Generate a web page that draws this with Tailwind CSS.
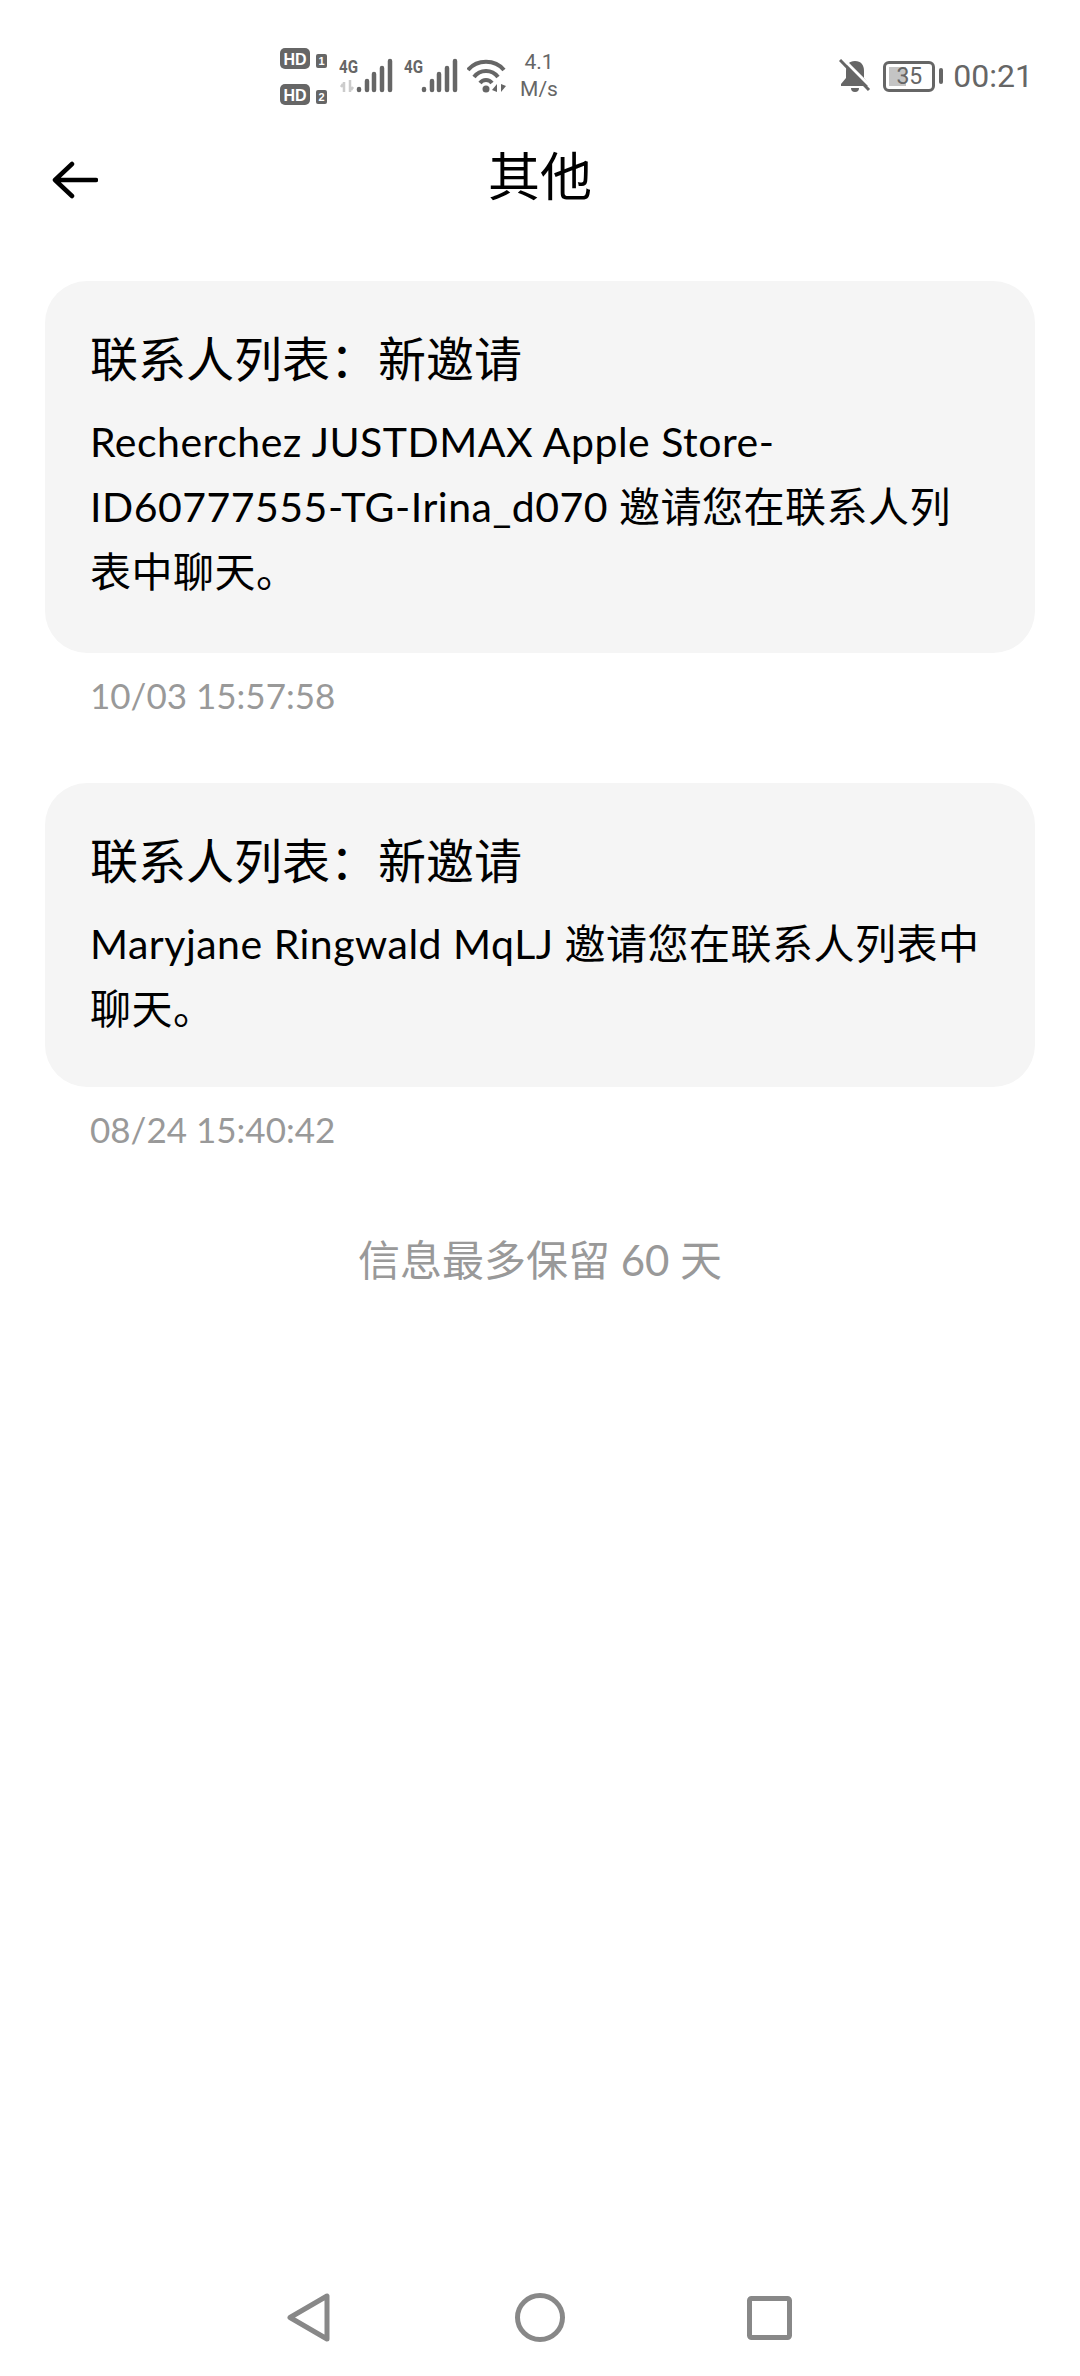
<!DOCTYPE html>
<html lang="zh">
<head>
    <meta charset="UTF-8">
    <meta name="viewport" content="width=device-width, initial-scale=1.0">
    <title>其他</title>
    <script src="https://cdn.jsdelivr.net/npm/@tailwindcss/browser@4"></script>
</head>
<body class="bg-white">
    <div class="w-[1080px] h-[2376px] flex flex-col font-['Lato','Noto_Sans_CJK_SC',sans-serif] text-black overflow-hidden">

        <!-- status bar -->
        <div class="h-[152px] shrink-0 flex items-center pl-[280px] pr-[47px] text-[#666] font-['Roboto','Noto_Sans_CJK_SC',sans-serif]">
            <div class="flex flex-col gap-[15px] w-[48px] shrink-0">
                <svg width="48" height="21" viewBox="0 0 48 21"><rect x="0" y="0" width="30" height="21" rx="5" fill="#666"/><text x="15" y="16.500" text-anchor="middle" font-family="Liberation Sans" font-weight="700" font-size="16" fill="#fff">HD</text><rect x="36" y="6" width="11" height="14" rx="2" fill="#666"/><text x="41.500" y="17" text-anchor="middle" font-family="Liberation Sans" font-weight="700" font-size="11" fill="#fff">1</text></svg>
                <svg width="48" height="21" viewBox="0 0 48 21"><rect x="0" y="0" width="30" height="21" rx="5" fill="#666"/><text x="15" y="16.500" text-anchor="middle" font-family="Liberation Sans" font-weight="700" font-size="16" fill="#fff">HD</text><rect x="36" y="6" width="11" height="14" rx="2" fill="#666"/><text x="41.500" y="17" text-anchor="middle" font-family="Liberation Sans" font-weight="700" font-size="11" fill="#fff">2</text></svg>
            </div>
            <svg class="ml-[11px] mb-[6px] shrink-0" width="54" height="40" viewBox="0 -6 54 40">
                <text x="0" y="14" font-family="Roboto" font-weight="700" font-size="19" fill="#666" textLength="19" lengthAdjust="spacingAndGlyphs">4G</text>
                <path d="M5 33V23M4 25l-2 3M11 21v12M12 31l2-3" stroke="#ccc" stroke-width="2.500" fill="none"/>
                <g stroke="#666" stroke-width="4.500" stroke-linecap="round"><path d="M20 31v-1M28 31V22M35 31V15M43 31V9M51 31V2"/></g>
            </svg>
            <svg class="ml-[11px] mb-[6px] shrink-0" width="54" height="40" viewBox="0 -6 54 40">
                <text x="0" y="14" font-family="Roboto" font-weight="700" font-size="19" fill="#666" textLength="19" lengthAdjust="spacingAndGlyphs">4G</text>
                <g stroke="#666" stroke-width="4.500" stroke-linecap="round"><path d="M20 31v-1M28 31V22M35 31V15M43 31V9M51 31V2"/></g>
            </svg>
            <svg class="ml-[9px] shrink-0" width="42" height="34" viewBox="0 0 42 34">
                <g fill="none" stroke="#666" stroke-width="4"><path d="M1 11C10 0 28 0 37 11"/><path d="M7 18C13 10 25 10 31 18"/><path d="M13 24C16 20 22 20 25 24"/></g>
                <circle cx="19" cy="30" r="3.500" fill="#666"/>
                <path d="M30 33v-8l-5 6zM34 25v8l5-6z" fill="#666"/>
            </svg>
            <div class="ml-[8px] w-[44px] shrink-0 text-[21px] leading-[27px] text-center">4.1<br>M/s</div>
            <svg class="ml-auto shrink-0" width="32" height="34" viewBox="0 0 32 34">
                <path d="M16 2c-6 0-9 4-9 10v7l-5 6v2h28v-2l-5-6v-7c0-6-3-10-9-10z" fill="#666"/>
                <path d="M12 29a4 4 0 0 0 8 0z" fill="#666"/>
                <path d="M3 -1l29 29" stroke="#fff" stroke-width="3"/>
                <path d="M1 1l29 30" stroke="#666" stroke-width="3"/>
            </svg>
            <div class="ml-[12px] w-[52px] h-[31px] shrink-0 border-[3px] border-[#666] rounded-[6px] p-[3px] relative">
                <div class="h-full w-[42%] bg-[#c4c4c4]"></div>
                <div class="absolute inset-0 flex items-center justify-center text-[23px] leading-none">35</div>
            </div>
            <div class="ml-[4px] w-[4px] h-[16px] bg-[#666] rounded-[2px] shrink-0"></div>
            <div class="ml-[10px] text-[32px] leading-none">00:21</div>
        </div>

        <!-- title -->
        <div class="h-[48px] shrink-0 flex items-center justify-center relative">
            <svg class="absolute left-[52px] top-[9px]" width="46" height="38" viewBox="0 0 46 38" fill="none" stroke="#000" stroke-width="4.500" stroke-linecap="round" stroke-linejoin="round"><path d="M3 19h41M20 3L3 19l17 16"/></svg>
            <h1 class="text-[52px] leading-none">其他</h1>
        </div>

        <!-- messages -->
        <div class="px-[45px] pt-[81px]">
            <div class="bg-[#f5f5f5] rounded-[42px] h-[372px] pl-[45px] pt-[50px]">
                <h2 class="text-[48px] leading-[56px]">联系人列表：新邀请</h2>
                <p class="mt-[22px] text-[41px] leading-[65px] tracking-[0.5px]">Recherchez JUSTDMAX Apple Store-<br>ID60777555-TG-Irina_d070 邀请您在联系人列<br>表中聊天。</p>
            </div>
            <p class="mt-[21px] pl-[45px] text-[35px] leading-[42px] text-[#999]">10/03 15:57:58</p>

            <div class="mt-[67px] bg-[#f5f5f5] rounded-[42px] h-[304px] pl-[45px] pt-[50px]">
                <h2 class="text-[48px] leading-[56px]">联系人列表：新邀请</h2>
                <p class="mt-[22px] text-[41px] leading-[65px] tracking-[0.5px]">Maryjane Ringwald MqLJ 邀请您在联系人列表中<br>聊天。</p>
            </div>
            <p class="mt-[21px] pl-[45px] text-[35px] leading-[42px] text-[#999]">08/24 15:40:42</p>

            <p class="mt-[82px] text-center text-[42px] leading-[56px] text-[#999]">信息最多保留 60 天</p>
        </div>

        <!-- nav bar -->
        <div class="mt-auto mb-[34px] h-[49px] flex items-center pl-[287px]">
            <svg width="43" height="49" viewBox="0 0 43 49" fill="none" stroke="#888" stroke-width="5" stroke-linejoin="round"><path d="M40 3v43L3 24.500z"/></svg>
            <svg class="ml-[185px]" width="50" height="49" viewBox="0 0 50 49" fill="none" stroke="#888" stroke-width="5"><ellipse cx="25" cy="24.500" rx="22.500" ry="22"/></svg>
            <svg class="ml-[182px]" width="45" height="44" viewBox="0 0 45 44" fill="none" stroke="#888" stroke-width="5" stroke-linejoin="round"><rect x="2.500" y="2.500" width="40" height="39" rx="2"/></svg>
        </div>
    </div>
</body>
</html>
